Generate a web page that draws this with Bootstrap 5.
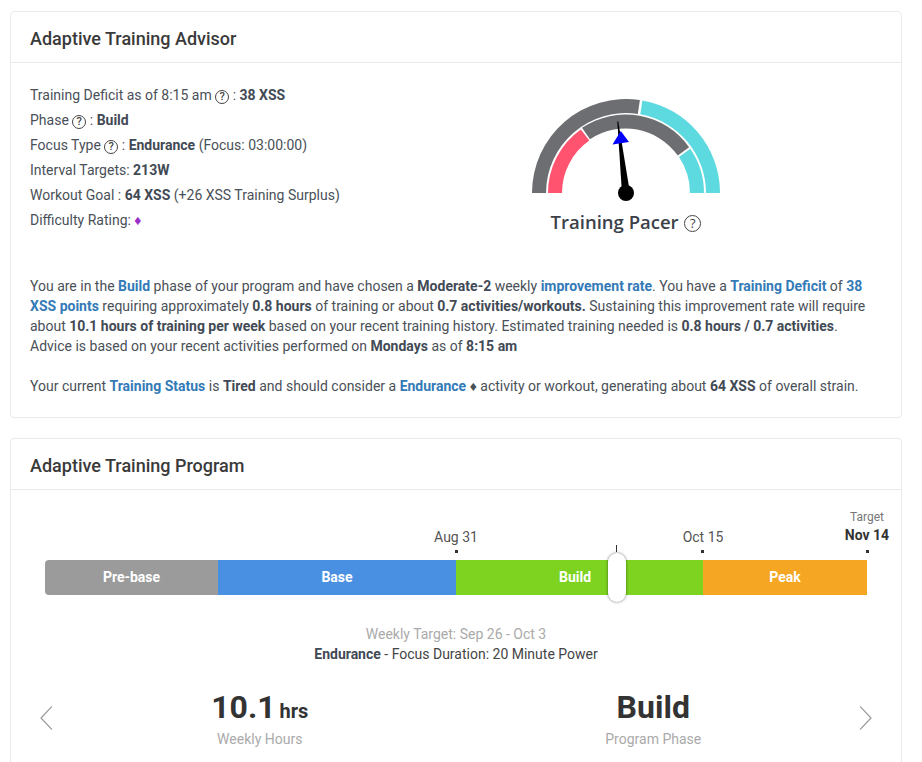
<!DOCTYPE html>
<html>
<head>
  <title>Adaptive Training</title>
  <link href="https://cdn.jsdelivr.net/npm/bootstrap@5.3.0/dist/css/bootstrap.min.css" rel="stylesheet">
  <style>
    html, body {
      height: 762px;
      overflow: hidden;
    }
    body {
      background: #fff;
      font-family: Roboto, "Liberation Sans", sans-serif;
      font-size: 14px;
      color: #4a5058;
      line-height: 20px;
    }
    .page-wrap {
      padding: 11px 20px 0 10px;
    }
    .panel {
      border: 1px solid #ebebeb;
      border-radius: 4px;
      margin-bottom: 20px;
    }
    .panel-head {
      height: 51px;
      padding: 0 19px;
      border-bottom: 1px solid #ebebeb;
      font-size: 18px;
      font-weight: 500;
      color: #3a3a3a;
      line-height: 53px;
    }
    .panel-main {
      padding: 20px 19px 21px;
    }
    .facts {
      width: 340px;
      flex-shrink: 0;
      line-height: 25px;
      height: 193px;
    }
    .diamond {
      color: #9b30c9;
      font-size: 14px;
    }
    .help-dot {
      display: inline-flex;
      align-items: center;
      justify-content: center;
      width: 14px;
      height: 14px;
      border: 1.2px solid #444;
      border-radius: 50%;
      font-size: 11px;
      font-weight: 500;
      line-height: 1;
      color: #444;
      vertical-align: 0;
    }
    .gauge-svg {
      margin-top: 14px;
    }
    .gauge-title {
      font-family: "Open Sans", "Liberation Sans", sans-serif;
      font-size: 18.5px;
      font-weight: 600;
      color: #3c4149;
      line-height: 24px;
      margin-top: 7px;
    }
    .gauge-title .help-dot {
      width: 17px;
      height: 17px;
      font-size: 13px;
      border-width: 1.6px;
      margin-left: 1px;
      vertical-align: 1px;
    }
    .advice p {
      margin: 0 0 20px;
    }
    .advice p:last-child {
      margin: 0;
    }
    .advice a {
      color: #337ab7;
      font-weight: 700;
      text-decoration: none;
    }
    b {
      color: #424a55;
    }
    .tl-wrap {
      padding: 0 23px 0 34px;
    }
    .tl-marks {
      position: relative;
      height: 70px;
    }
    .tl-label {
      position: absolute;
      transform: translateX(-50%);
      bottom: 14px;
      white-space: nowrap;
      text-align: center;
      color: #555;
      line-height: 18px;
    }
    .tl-label small {
      display: block;
      font-size: 12px;
      color: #777;
    }
    .tl-label b {
      color: #333;
    }
    .tl-label-end {
      bottom: 16px;
    }
    .tl-dot {
      position: absolute;
      bottom: 7px;
      width: 3px;
      height: 3px;
      background: #333;
      margin-left: -1px;
    }
    .tl-tick {
      position: absolute;
      bottom: 8px;
      width: 1.5px;
      height: 7px;
      background: #333;
    }
    .tl-bar {
      position: relative;
      display: flex;
      height: 35px;
      border-radius: 4px;
      overflow: hidden;
      color: #fff;
      font-weight: 700;
      line-height: 35px;
      text-align: center;
    }
    .tl-seg {
      flex-shrink: 0;
    }
    .tl-outer {
      position: relative;
    }
    .tl-handle {
      position: absolute;
      top: -7px;
      left: 563px;
      width: 18px;
      height: 49px;
      background: #fff;
      border-radius: 9px;
      box-shadow: 0 0 3px rgba(0, 0, 0, .55);
    }
    .week-info {
      margin-top: 29px;
      text-align: center;
    }
    .week-info .week-range {
      color: #aaa;
    }
    .week-info .week-focus {
      color: #444;
    }
    .stat-row {
      padding: 0 29px;
      margin-top: 23px;
    }
    .stat-arrow {
      width: 12px;
      flex-shrink: 0;
      margin-top: 18px;
    }
    .stat-cell {
      text-align: center;
      flex: 1 1 0;
    }
    .stat-num {
      height: 40px;
      font-size: 32px;
      font-weight: 700;
      color: #333;
      line-height: 40px;
    }
    .stat-num span {
      font-size: 20px;
      margin-left: 4px;
    }
    .stat-cap {
      color: #aaa;
      margin-top: 2px;
    }
  </style>
</head>
<body>
  <div class="page-wrap">

    <!-- Advisor -->
    <div class="panel">
      <div class="panel-head">Adaptive Training Advisor</div>
      <div class="panel-main">
        <div class="d-flex">
          <div class="facts">
            <div>Training Deficit as of 8:15 am <span class="help-dot">?</span> : <b>38 XSS</b></div>
            <div>Phase <span class="help-dot">?</span> : <b>Build</b></div>
            <div>Focus Type <span class="help-dot">?</span> : <b>Endurance</b> (Focus: 03:00:00)</div>
            <div>Interval Targets: <b>213W</b></div>
            <div>Workout Goal : <b>64 XSS</b> (+26 XSS Training Surplus)</div>
            <div>Difficulty Rating: <span class="diamond">♦</span></div>
          </div>
          <div class="flex-grow-1 text-center">
            <svg width="190" height="106" viewBox="0 0 190 106" class="gauge-svg d-block mx-auto">
              <!-- centre is 95,96 -->
              <path d="M1 96A94 94 0 0 1 108.9 3L106.8 16.9A80 80 0 0 0 15 96Z" fill="#6d6e71"/>
              <path d="M111.4 3.4A94 94 0 0 1 189 96H175A80 80 0 0 0 109.3 17.3Z" fill="#5ddae0"/>
              <path d="M17 96A78 78 0 0 1 49.8 32.5L58.3 43.6A64 64 0 0 0 31 96Z" fill="#ff5370"/>
              <path d="M51 30.8A78 78 0 0 1 158.1 50.2L146.8 58.6A64 64 0 0 0 59 42.3Z" fill="#6d6e71"/>
              <path d="M159.3 51.7A78 78 0 0 1 173 96H159A64 64 0 0 0 148 60Z" fill="#5ddae0"/>
              <polygon points="86.3,24.5 87.3,24.5 99,96 91,96.8" fill="#000"/>
              <circle cx="95" cy="96" r="8" fill="#000"/>
              <polygon points="89.8,34 81.5,47.5 98,45" fill="#0000ff"/>
            </svg>
            <div class="gauge-title">Training Pacer <span class="help-dot">?</span></div>
          </div>
        </div>
        <div class="advice">
          <p>You are in the <a href="#">Build</a> phase of your program and have chosen a <b>Moderate-2</b> weekly <a href="#">improvement rate</a>. You have a <a href="#">Training Deficit</a> of <a href="#">38 XSS</a> <a href="#">points</a> requiring approximately <b>0.8 hours</b> of training or about <b>0.7 activities/workouts.</b> Sustaining this improvement rate will require about <b>10.1 hours of training per week</b> based on your recent training history. Estimated training needed is <b>0.8 hours / 0.7 activities</b>. Advice is based on your recent activities performed on <b>Mondays</b> as of <b>8:15 am</b></p>
          <p>Your current <a href="#">Training Status</a> is <b>Tired</b> and should consider a <a href="#">Endurance</a> ♦ activity or workout, generating about <b>64 XSS</b> of overall strain.</p>
        </div>
      </div>
    </div>

    <!-- Program -->
    <div class="panel">
      <div class="panel-head">Adaptive Training Program</div>
      <div class="tl-wrap">
        <div class="tl-marks">
          <div class="tl-label" style="left:411px">Aug 31</div>
          <div class="tl-dot" style="left:411px"></div>
          <div class="tl-tick" style="left:570.5px"></div>
          <div class="tl-label" style="left:658px">Oct 15</div>
          <div class="tl-dot" style="left:657px"></div>
          <div class="tl-label tl-label-end" style="left:822px"><small>Target</small><b>Nov 14</b></div>
          <div class="tl-dot" style="left:822px"></div>
        </div>
        <div class="tl-outer">
          <div class="tl-bar">
            <div class="tl-seg" style="width:173px;background:#9b9b9b">Pre-base</div>
            <div class="tl-seg" style="width:238px;background:#4a90e2">Base</div>
            <div class="tl-seg" style="width:247px;background:#7ed321;padding-right:9px">Build</div>
            <div class="tl-seg" style="width:164px;background:#f5a623">Peak</div>
          </div>
          <div class="tl-handle"></div>
        </div>
      </div>
      <div class="week-info">
        <div class="week-range">Weekly Target: Sep 26 - Oct 3</div>
        <div class="week-focus"><b>Endurance</b> - Focus Duration: 20 Minute Power</div>
      </div>
      <div class="stat-row d-flex">
        <svg class="stat-arrow me-2" width="12" height="26" viewBox="0 0 12 26"><path d="M12 1.5L1 13L12 24.5" fill="none" stroke="#999" stroke-width="1.2"/></svg>
        <div class="stat-cell" style="margin-left:3px">
          <div class="stat-num">10.1<span>hrs</span></div>
          <div class="stat-cap">Weekly Hours</div>
        </div>
        <div class="stat-cell" style="margin-right:2px">
          <div class="stat-num">Build</div>
          <div class="stat-cap">Program Phase</div>
        </div>
        <svg class="stat-arrow ms-2" width="12" height="26" viewBox="0 0 12 26"><path d="M0 1.5L11 13L0 24.5" fill="none" stroke="#999" stroke-width="1.2"/></svg>
      </div>
      <div style="height:60px"></div>
    </div>

  </div>
  <script src="https://cdn.jsdelivr.net/npm/bootstrap@5.3.0/dist/js/bootstrap.bundle.min.js"></script>
</body>
</html>
